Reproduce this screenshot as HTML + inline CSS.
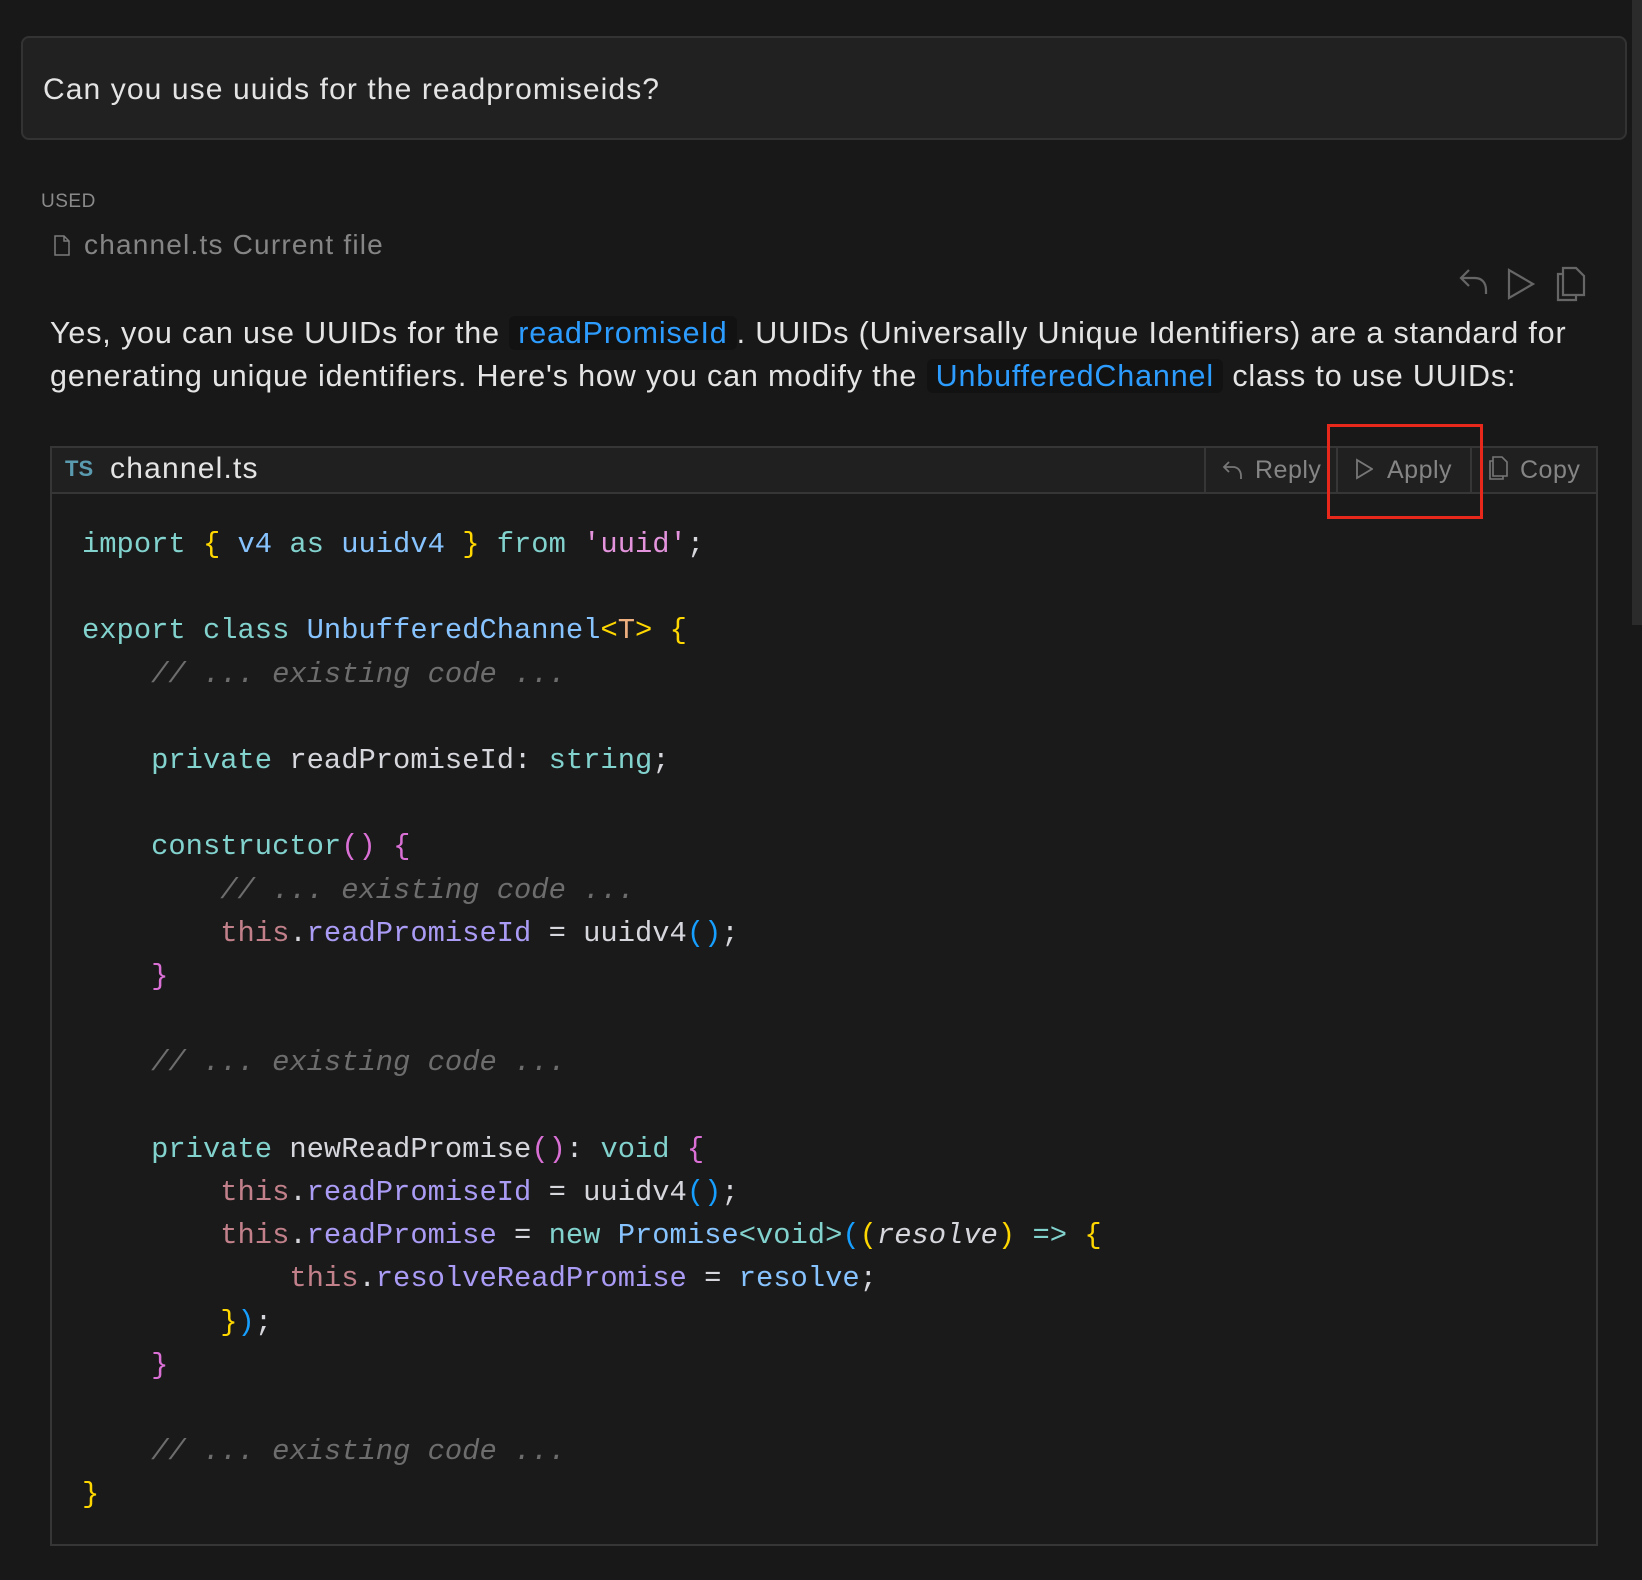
<!DOCTYPE html>
<html><head><meta charset="utf-8"><style>
*{margin:0;padding:0;box-sizing:border-box}
body{width:1642px;height:1580px;background:#181818;position:relative;overflow:hidden;font-family:"Liberation Sans",sans-serif;color:#d6d6dd}
.abs{position:absolute;white-space:nowrap}
.input{left:21px;top:36px;width:1606px;height:104px;border:2px solid #333;border-radius:8px;background:#212121}
.code{left:50px;top:446px;width:1548px;height:1100px;border:2px solid #363636;background:#1a1a1a}
.hdr{position:absolute;left:0;top:0;right:0;height:46px;background:#202020;border-bottom:2px solid #363636}
.sep{position:absolute;top:0;width:2px;height:44px;background:#363636}
.btn{color:#858585;font-size:25px;letter-spacing:0.5px}
pre{position:absolute;left:82px;top:523px;font-family:"Liberation Mono",monospace;font-size:28.8px;line-height:43.2px;color:#d6d6dd}
.k{color:#82d2ce}.b{color:#87c3ff}.y{color:#ffd700}.p{color:#da70d6}.bl{color:#179fff}.s{color:#e394dc}.c{color:#6d6d6d;font-style:italic}.t{color:#c1808a}.pr{color:#aa9bf5}.o{color:#efb080}
.chip{background:#121212;border-radius:6px;color:#2d9cff;padding:0 9px}
</style></head><body>
<div class="abs" style="left:1632px;top:0;width:10px;height:625px;background:#2b2b2b"></div>
<div class="abs input"></div>
<div class="abs" style="left:43px;top:73px;font-size:30px;letter-spacing:1.1px;color:#e4e4e4">Can you use uuids for the readpromiseids?</div>
<div class="abs" style="left:41px;top:191px;font-size:19px;letter-spacing:0.5px;color:#8a8a8a">USED</div>
<svg class="abs" style="left:54px;top:235px" width="16" height="21" viewBox="0 0 16 21"><path d="M1 1h9l5 5v14H1z M10 1v5h5" fill="none" stroke="#7a7a7a" stroke-width="1.5"/></svg>
<div class="abs" style="left:84px;top:229px;font-size:28px;letter-spacing:1.2px;color:#858585">channel.ts Current file</div>
<svg class="abs" style="left:1459px;top:266px" width="130" height="36" viewBox="0 0 130 36" fill="none" stroke="#666" stroke-width="2.2">
<path d="M10 4L2 12l8 8M2 12h14c7 0 11 5 11 12v4"/>
<path d="M50 4v28l24-14z"/>
<path d="M104 8h-5v26h18v-5"/><path d="M104 2h13l8 8v19h-21z"/>
</svg>
<div class="abs" style="left:50px;top:312px;font-size:30.5px;line-height:43px;letter-spacing:0.85px;color:#e4e4e4">Yes, you can use UUIDs for the <span class="chip">readPromiseId</span>. UUIDs (Universally Unique Identifiers) are a standard for<br>generating unique identifiers. Here's how you can modify the <span class="chip">UnbufferedChannel</span> class to use UUIDs:</div>
<div class="abs code"><div class="hdr">
<div class="sep" style="left:1152px"></div><div class="sep" style="left:1284px"></div><div class="sep" style="left:1418px"></div>
</div></div>
<div class="abs" style="left:65px;top:456px;font-size:22px;color:#5a9bb0;font-weight:bold">TS</div>
<div class="abs" style="left:110px;top:452px;font-size:30px;letter-spacing:1.2px;color:#e4e4e4">channel.ts</div>
<svg class="abs" style="left:1222px;top:459px" width="22" height="22" viewBox="0 0 22 22" fill="none" stroke="#777" stroke-width="1.8"><path d="M7 3L2 8l5 5M2 8h9c5 0 8 4 8 9v3"/></svg>
<div class="abs btn" style="left:1255px;top:456px">Reply</div>
<svg class="abs" style="left:1355px;top:458px" width="18" height="22" viewBox="0 0 18 22" fill="none" stroke="#777" stroke-width="1.8"><path d="M2 2v18l15-9z"/></svg>
<div class="abs btn" style="left:1387px;top:456px">Apply</div>
<svg class="abs" style="left:1488px;top:456px" width="22" height="24" viewBox="0 0 22 24" fill="none" stroke="#777" stroke-width="1.6"><path d="M5 5H2v18h13v-3"/><path d="M5 1h9l5 5v14H5z"/></svg>
<div class="abs btn" style="left:1520px;top:456px">Copy</div>
<div class="abs" style="left:1327px;top:424px;width:156px;height:95px;border:3.5px solid #e8281a"></div>
<pre><span class="k">import</span> <span class="y">{</span> <span class="b">v4</span> <span class="k">as</span> <span class="b">uuidv4</span> <span class="y">}</span> <span class="k">from</span> <span class="s">'uuid'</span>;

<span class="k">export</span> <span class="k">class</span> <span class="b">UnbufferedChannel</span><span class="y">&lt;</span><span class="o">T</span><span class="y">&gt;</span> <span class="y">{</span>
    <span class="c">// ... existing code ...</span>

    <span class="k">private</span> readPromiseId: <span class="k">string</span>;

    <span class="k">constructor</span><span class="p">()</span> <span class="p">{</span>
        <span class="c">// ... existing code ...</span>
        <span class="t">this</span>.<span class="pr">readPromiseId</span> = uuidv4<span class="bl">()</span>;
    <span class="p">}</span>

    <span class="c">// ... existing code ...</span>

    <span class="k">private</span> newReadPromise<span class="p">()</span>: <span class="k">void</span> <span class="p">{</span>
        <span class="t">this</span>.<span class="pr">readPromiseId</span> = uuidv4<span class="bl">()</span>;
        <span class="t">this</span>.<span class="pr">readPromise</span> = <span class="k">new</span> <span class="b">Promise</span><span class="k">&lt;void&gt;</span><span class="bl">(</span><span class="y">(</span><i>resolve</i><span class="y">)</span> <span class="k">=&gt;</span> <span class="y">{</span>
            <span class="t">this</span>.<span class="pr">resolveReadPromise</span> = <span class="b">resolve</span>;
        <span class="y">}</span><span class="bl">)</span>;
    <span class="p">}</span>

    <span class="c">// ... existing code ...</span>
<span class="y">}</span></pre>
</body></html>
